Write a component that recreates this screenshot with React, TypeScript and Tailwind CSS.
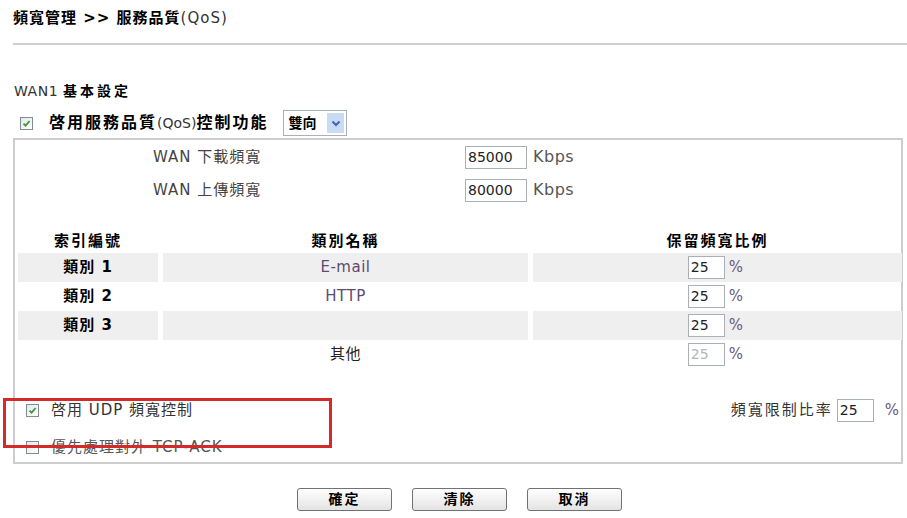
const font = "font-['DejaVu_Sans','Noto_Sans_CJK_TC',sans-serif]";

const rows = [
  { label: '類別 1', name: 'E-mail', value: '25', shade: true, disabled: false },
  { label: '類別 2', name: 'HTTP', value: '25', shade: false, disabled: false },
  { label: '類別 3', name: '', value: '25', shade: true, disabled: false },
  { label: '', name: '其他', value: '25', shade: false, disabled: true },
];

const CheckBox = ({ checked }: { checked: boolean }) => (
  <span className="inline-flex w-[13px] h-[13px] items-center justify-center border border-[#7f8b97] bg-gradient-to-br from-[#e4e8ec] to-white">
    {checked && (
      <svg width="9" height="9" viewBox="0 0 9 9" fill="none">
        <path d="M1.5 4.6L3.6 6.7L7.6 2" stroke="#3c9a3c" strokeWidth="1.8" />
      </svg>
    )}
  </span>
);

const TextBox = ({ value, w, disabled }: { value: string; w: string; disabled?: boolean }) => (
  <span className={`inline-flex items-center h-[23px] ${w} border border-[#a9b0b8] bg-white pl-[2px] text-[14px] ${disabled ? 'text-[#b5b5b5]' : 'text-[#222]'}`}>
    {value}
  </span>
);

export default function App() {
  return (
    <div className={`relative w-[907px] h-[518px] overflow-hidden bg-white text-[#333] ${font}`}>
      {/* page title */}
      <div className="h-[29px] pl-[13px] flex items-end text-[15px] tracking-[1px]">
        <span className="font-bold text-black">頻寬管理 &gt;&gt; 服務品質</span>
        <span className="text-[#333]">(QoS)</span>
      </div>
      <div className="ml-[13px] mt-[14px] h-[2px] bg-[#cfcfcf]" />

      <div className="mt-[36px] h-[20px] pl-[14px] flex items-center text-[14px]">
        <span className="text-[#333] tracking-[0.5px]">WAN1&nbsp;</span>
        <span className="font-bold text-black tracking-[3px]">基本設定</span>
      </div>

      <div className="mt-[9px] h-[26px] pl-[20px] flex items-center">
        <CheckBox checked />
        <span className="ml-[16px] text-[16px] font-bold text-black tracking-[2px]">啓用服務品質</span>
        <span className="text-[14px] text-[#333]">(QoS)</span>
        <span className="text-[16px] font-bold text-black tracking-[2px]">控制功能</span>
        <div className="ml-[15px] flex h-[26px] w-[64px] items-center border border-[#a8b0ba] bg-white">
          <span className="flex-1 pl-[4px] text-[14px] font-bold text-black">雙向</span>
          <span className="mr-[2px] flex h-[20px] w-[17px] items-center justify-center bg-[#c9dbf4]">
            <svg width="10" height="7" viewBox="0 0 10 7" fill="none">
              <path d="M1.5 1.5L5 5L8.5 1.5" stroke="#3b66b3" strokeWidth="2" />
            </svg>
          </span>
        </div>
      </div>

      {/* settings box */}
      <div className="ml-[13px] mr-[4px] mt-[2px] border-2 border-[#cdcdcd] pb-[3px]">
        <div className="mt-[5px] h-[24px] flex items-center text-[15px]">
          <span className="w-[450px] pl-[138px] tracking-[1px] text-[#444]">WAN 下載頻寬</span>
          <TextBox value="85000" w="w-[62px]" />
          <span className="ml-[6px] text-[16px] tracking-[0.5px] text-[#555]">Kbps</span>
        </div>
        <div className="mt-[9px] h-[24px] flex items-center text-[15px]">
          <span className="w-[450px] pl-[138px] tracking-[1px] text-[#444]">WAN 上傳頻寬</span>
          <TextBox value="80000" w="w-[62px]" />
          <span className="ml-[6px] text-[16px] tracking-[0.5px] text-[#555]">Kbps</span>
        </div>

        <div className="mt-[27px] ml-[3px] grid grid-cols-[140px_365px_369px] gap-x-[5px]">
          <div className="h-[24px] flex items-center justify-center text-[15px] font-bold text-black tracking-[2px]">索引編號</div>
          <div className="h-[24px] flex items-center justify-center text-[15px] font-bold text-black tracking-[2px]">類別名稱</div>
          <div className="h-[24px] flex items-center justify-center text-[15px] font-bold text-black tracking-[2px]">保留頻寬比例</div>
          {rows.map((r, i) => (
            <div key={i} className="contents">
              <div className={`h-[29px] flex items-center justify-center text-[15px] font-bold text-black tracking-[1px] ${r.shade ? 'bg-[#efefef]' : ''}`}>
                {r.label}
              </div>
              <div className={`h-[29px] flex items-center justify-center text-[15px] tracking-[0.5px] ${r.disabled ? 'text-[#222]' : 'text-[#5c4b70]'} ${r.shade ? 'bg-[#efefef]' : ''}`}>
                {r.name}
              </div>
              <div className={`h-[29px] flex items-center justify-center pr-[4px] ${r.shade ? 'bg-[#efefef]' : ''}`}>
                <TextBox value={r.value} w="w-[37px]" disabled={r.disabled} />
                <span className="ml-[4px] text-[15px] text-[#6b5a80]">%</span>
              </div>
            </div>
          ))}
        </div>

        <div className="mt-[29px] h-[24px] flex items-center pl-[11px] text-[15px]">
          <CheckBox checked />
          <span className="ml-[12px] tracking-[1px] text-[#333]">啓用 UDP 頻寬控制</span>
          <span className="ml-auto tracking-[2px] text-[#333]">頻寬限制比率</span>
          <span className="ml-[4px]"><TextBox value="25" w="w-[37px]" /></span>
          <span className="ml-[11px] mr-[2px] text-[15px] text-[#6b5a80]">%</span>
        </div>
        <div className="mt-[13px] h-[24px] flex items-center pl-[11px] text-[15px]">
          <CheckBox checked={false} />
          <span className="ml-[12px] tracking-[1px] text-[#555]">優先處理對外 TCP-ACK</span>
        </div>
      </div>

      {/* red highlight over the UDP options */}
      <div className="absolute left-[3px] top-[398px] w-[329px] h-[50px] border-[3px] border-[#d42a2a]" />

      {/* buttons */}
      <div className="mt-[24px] flex gap-[20px] pl-[297px]">
        {['確定', '清除', '取消'].map((t) => (
          <button
            key={t}
            className="h-[23px] w-[95px] rounded-[3px] border border-[#6f7378] bg-gradient-to-b from-white to-[#e3e3e3] text-[14px] font-bold text-black tracking-[2px]"
          >
            {t}
          </button>
        ))}
      </div>
    </div>
  );
}
